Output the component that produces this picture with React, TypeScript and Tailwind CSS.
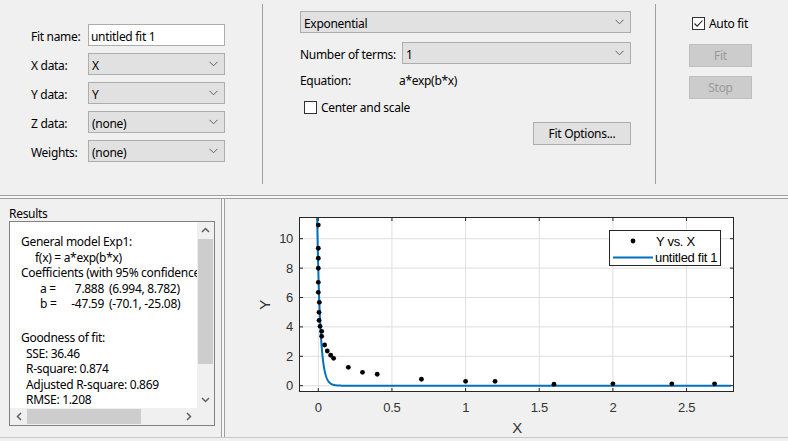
import React from "react";

function Chevron() {
  return (
    <svg width="9" height="6" viewBox="0 0 9 6">
      <polyline points="0.5,0.8 4.5,4.8 8.5,0.8" fill="none" stroke="#606060" strokeWidth="1" />
    </svg>
  );
}

function Select({ value, className }: { value: string; className: string }) {
  return (
    <div className={`h-[22px] bg-[#e1e1e1] border border-[#adadad] flex items-center justify-between pl-[3px] pr-[6px] ${className}`}>
      <span className="pt-[3px]">{value}</span>
      <Chevron />
    </div>
  );
}

function Row({ label, children }: { label: string; children: React.ReactNode }) {
  return (
    <div className="flex items-center h-[22px]">
      <div className="w-[57px] pt-[4px]">{label}</div>
      {children}
    </div>
  );
}

function CheckBox({ checked }: { checked?: boolean }) {
  return (
    <div className="w-[13px] h-[13px] border border-[#333333] bg-white flex items-center justify-center">
      {checked && (
        <svg width="11" height="11" viewBox="0 0 11 11">
          <polyline points="1.5,5.5 4.2,8.2 9.5,2.5" fill="none" stroke="#222" strokeWidth="1.1" />
        </svg>
      )}
    </div>
  );
}

const X = (x: number) => 318.3 + x * 147.3;
const Y = (y: number) => 385.7 - y * 14.7;

const pts: [number, number][] = [
  [0, 10.93], [0, 9.35], [0, 8.67], [0, 7.99], [0, 7.03], [0, 6.35], [0.007, 5.67], [0.005, 4.99],
  [0.005, 4.45], [0.012, 4.04], [0.023, 3.7], [0.023, 3.36], [0.043, 2.77], [0.061, 2.36], [0.084, 2.07],
  [0.104, 1.86], [0.204, 1.25], [0.3, 0.91], [0.4, 0.78], [0.7, 0.44], [1.0, 0.3], [1.2, 0.3],
  [1.6, 0.1], [2.0, 0.13], [2.4, 0.13], [2.69, 0.13],
];

function curvePath() {
  const a = 7.888, b = -47.59;
  const out: string[] = [];
  let x = -0.02;
  while (x <= 2.83) {
    const y = a * Math.exp(b * x);
    out.push(`${X(x).toFixed(2)},${Math.max(Y(y), 150).toFixed(2)}`);
    x += x < 0.25 ? 0.001 : 0.05;
  }
  return "M" + out.join(" L");
}

function Plot() {
  const xt = [0, 0.5, 1, 1.5, 2, 2.5];
  const xl = ["0", "0.5", "1", "1.5", "2", "2.5"];
  const yt = [0, 2, 4, 6, 8, 10];
  const L = 299, R = 734, T = 217, B = 392;
  return (
    <svg width="563" height="238" viewBox="225 199 563 238" className="block">
      <defs>
        <clipPath id="ax">
          <rect x={L} y={T} width={R - L} height={B - T} />
        </clipPath>
      </defs>
      <rect x={L} y={T} width={R - L} height={B - T} fill="#ffffff" />
      {xt.map((t) => (
        <line key={"gx" + t} x1={X(t)} x2={X(t)} y1={T} y2={B} stroke="#dfdfdf" strokeWidth="1" />
      ))}
      {yt.map((t) => (
        <line key={"gy" + t} x1={L} x2={R} y1={Y(t)} y2={Y(t)} stroke="#dfdfdf" strokeWidth="1" />
      ))}
      <g clipPath="url(#ax)">
        <path d={curvePath()} fill="none" stroke="#0072bd" strokeWidth="2" />
        {pts.map(([x, y], i) => (
          <circle key={i} cx={X(x)} cy={Y(y)} r="2.4" fill="#000" />
        ))}
      </g>
      {xt.map((t) => (
        <g key={"tx" + t}>
          <line x1={X(t)} x2={X(t)} y1={B} y2={B - 4} stroke="#262626" />
          <line x1={X(t)} x2={X(t)} y1={T} y2={T + 4} stroke="#262626" />
        </g>
      ))}
      {yt.map((t) => (
        <g key={"ty" + t}>
          <line x1={L} x2={L + 4} y1={Y(t)} y2={Y(t)} stroke="#262626" />
          <line x1={R} x2={R - 4} y1={Y(t)} y2={Y(t)} stroke="#262626" />
        </g>
      ))}
      <rect x={L + 0.5} y={T + 0.5} width={R - L - 1} height={B - T - 1} fill="none" stroke="#262626" strokeWidth="1" />
      <g fontFamily="'Liberation Sans', Arial, sans-serif" fontSize="13" fill="#333333">
        {xt.map((t, i) => (
          <text key={"lx" + t} x={X(t)} y={412} textAnchor="middle">
            {xl[i]}
          </text>
        ))}
        {yt.map((t) => (
          <text key={"ly" + t} x={293} y={Y(t) + 4.5} textAnchor="end">
            {t}
          </text>
        ))}
        <text x={517} y={433} textAnchor="middle" fontSize="15">
          X
        </text>
        <text x={270} y={305} textAnchor="middle" fontSize="15" transform="rotate(-90 270 305)">
          Y
        </text>
      </g>
      <g fontFamily="'Liberation Sans', Arial, sans-serif" fontSize="13" fill="#000">
        <rect x={609.5} y={230.5} width={111} height={35} fill="#fff" stroke="#262626" strokeWidth="1" />
        <circle cx={633} cy={241} r="2.4" fill="#000" />
        <text x={656} y={245.5}>Y vs. X</text>
        <line x1={613} x2={653} y1={257.5} y2={257.5} stroke="#0072bd" strokeWidth="2" />
        <text x={655} y={262}>untitled fit 1</text>
      </g>
    </svg>
  );
}

function ArrowUp() {
  return (
    <svg width="9" height="6" viewBox="0 0 9 6">
      <polyline points="1,5 4.5,1.5 8,5" fill="none" stroke="#606060" strokeWidth="1.5" />
    </svg>
  );
}
function ArrowDown() {
  return (
    <svg width="9" height="6" viewBox="0 0 9 6">
      <polyline points="1,1 4.5,4.5 8,1" fill="none" stroke="#606060" strokeWidth="1.5" />
    </svg>
  );
}
function ArrowLeft() {
  return (
    <svg width="6" height="9" viewBox="0 0 6 9">
      <polyline points="5,1 1.5,4.5 5,8" fill="none" stroke="#606060" strokeWidth="1.5" />
    </svg>
  );
}
function ArrowRight() {
  return (
    <svg width="6" height="9" viewBox="0 0 6 9">
      <polyline points="1,1 4.5,4.5 1,8" fill="none" stroke="#606060" strokeWidth="1.5" />
    </svg>
  );
}

function Results() {
  const line = "h-[15.5px] leading-[15.5px] whitespace-nowrap";
  return (
    <div className="w-[221px] pt-[7px] pl-[9px]">
      <div className="leading-[15px] h-[15px]">Results</div>
      <div className="w-[206px] h-[205px] border border-[#828282] bg-white flex flex-col">
        <div className="flex h-[186px]">
          <div className="w-[187px] overflow-hidden pt-[12px] pl-[11px]">
            <div className={line}>General model Exp1:</div>
            <div className={`${line} pl-[14px]`}>f(x) = a*exp(b*x)</div>
            <div className={line}>Coefficients (with 95% confidence</div>
            <div className={`${line} flex`}>
              <span className="w-[49px] shrink-0 pl-[19px]">a =</span>
              <span className="w-[34px] shrink-0 text-right">7.888</span>
              <span className="shrink-0 pl-[5px]">(6.994, 8.782)</span>
            </div>
            <div className={`${line} flex`}>
              <span className="w-[49px] shrink-0 pl-[19px]">b =</span>
              <span className="w-[34px] shrink-0 text-right">-47.59</span>
              <span className="shrink-0 pl-[5px]">(-70.1, -25.08)</span>
            </div>
            <div className="h-[18.5px]" />
            <div className={line}>Goodness of fit:</div>
            <div className={`${line} pl-[5px]`}>SSE: 36.46</div>
            <div className={`${line} pl-[5px]`}>R-square: 0.874</div>
            <div className={`${line} pl-[5px]`}>Adjusted R-square: 0.869</div>
            <div className={`${line} pl-[5px]`}>RMSE: 1.208</div>
          </div>
          <div className="w-[17px] bg-[#f0f0f0] flex flex-col items-center">
            <div className="h-[16px] flex items-center justify-center">
              <ArrowUp />
            </div>
            <div className="h-[125px] w-[15px] mt-[1px] bg-[#cdcdcd]" />
            <div className="flex-1" />
            <div className="h-[17px] flex items-center justify-center">
              <ArrowDown />
            </div>
          </div>
        </div>
        <div className="flex h-[17px]">
          <div className="w-[187px] bg-[#f0f0f0] flex items-center">
            <div className="w-[17px] flex justify-center">
              <ArrowLeft />
            </div>
            <div className="w-[114px] h-[15px] bg-[#cdcdcd]" />
            <div className="flex-1" />
            <div className="w-[17px] flex justify-center">
              <ArrowRight />
            </div>
          </div>
          <div className="w-[17px] bg-[#f0f0f0]" />
        </div>
      </div>
    </div>
  );
}

export default function App() {
  return (
    <div className="w-[788px] h-[441px] bg-[#f0f0f0] text-[12px] tracking-[-0.3px] text-black font-['Noto_Sans',sans-serif] overflow-hidden flex flex-col">
      {/* top */}
      <div className="h-[195px] flex">
        <div className="w-[262px] pl-[31px] pt-[24px] flex flex-col gap-[7px]">
          <Row label="Fit name:">
            <div className="w-[137px] h-[22px] bg-white border border-[#acacac] flex items-center pl-[2px]">
              <span className="pt-[3px]">untitled fit 1</span>
            </div>
          </Row>
          <Row label="X data:">
            <Select value="X" className="w-[137px]" />
          </Row>
          <Row label="Y data:">
            <Select value="Y" className="w-[137px]" />
          </Row>
          <Row label="Z data:">
            <Select value="(none)" className="w-[137px]" />
          </Row>
          <Row label="Weights:">
            <Select value="(none)" className="w-[137px]" />
          </Row>
        </div>
        <div className="w-px bg-[#a0a0a0] mt-[4px] mb-[11px]" />
        <div className="w-[392px] pl-[37px] pt-[11px] flex flex-col">
          <Select value="Exponential" className="w-[331px]" />
          <div className="flex items-center mt-[9px] h-[22px]">
            <div className="w-[102px] pt-[3px]">Number of terms:</div>
            <Select value="1" className="w-[229px]" />
          </div>
          <div className="flex items-center mt-[7px] h-[16px]">
            <div className="w-[99px] pt-[3px]">Equation:</div>
            <div className="pt-[3px]">a*exp(b*x)</div>
          </div>
          <div className="flex items-center mt-[12px] h-[16px] pl-[4px] gap-[4px]">
            <CheckBox />
            <div className="pt-[1px]">Center and scale</div>
          </div>
          <div className="flex justify-end w-[331px] mt-[7px]">
            <div className="w-[98px] h-[23px] bg-[#e1e1e1] border border-[#adadad] flex items-center justify-center">
              <span className="pt-[1px]">Fit Options...</span>
            </div>
          </div>
        </div>
        <div className="w-px bg-[#a0a0a0] mt-[4px] mb-[11px]" />
        <div className="flex-1 pl-[33px] pt-[15px] flex flex-col">
          <div className="flex items-center h-[16px] pl-[3px] gap-[4px]">
            <CheckBox checked />
            <div className="pt-[2px]">Auto fit</div>
          </div>
          <div className="w-[63px] h-[23px] mt-[13px] bg-[#cccccc] border border-[#bfbfbf] text-[#9a9a9a] flex items-center justify-center">
            <span className="pt-[1px]">Fit</span>
          </div>
          <div className="w-[63px] h-[23px] mt-[9px] bg-[#cccccc] border border-[#bfbfbf] text-[#9a9a9a] flex items-center justify-center">
            <span className="pt-[1px]">Stop</span>
          </div>
        </div>
      </div>
      {/* splitter */}
      <div className="h-[4px] border-t border-b border-[#a0a0a0] bg-[#f7f7f7]" />
      {/* bottom */}
      <div className="h-[239px] flex border-b border-[#c8c8c8]">
        <Results />
        <div className="w-[4px] border-l border-r border-[#a0a0a0] bg-[#f7f7f7]" />
        <div className="flex-1">
          <Plot />
        </div>
      </div>
    </div>
  );
}
